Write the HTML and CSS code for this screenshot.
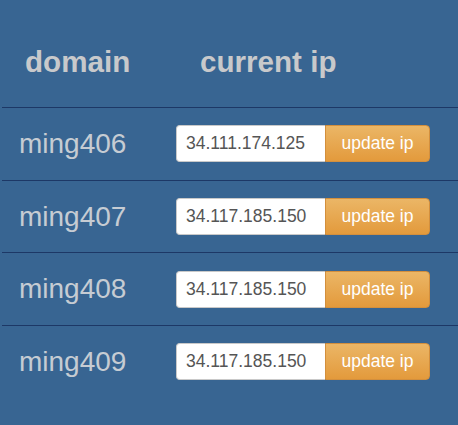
FILE: index.html
```html
<!DOCTYPE html>
<html>
<head>
<meta charset="utf-8">
<link rel="stylesheet" href="styles.css">
</head>
<body>
<div class="table">
  <div class="head">
    <div class="th th-domain">domain</div>
    <div class="th th-ip">current ip</div>
  </div>
  <div class="row">
    <div class="name">ming406</div>
    <div class="group"><input class="ip" type="text" value="34.111.174.125"><button class="btn">update ip</button></div>
  </div>
  <div class="row">
    <div class="name">ming407</div>
    <div class="group"><input class="ip" type="text" value="34.117.185.150"><button class="btn">update ip</button></div>
  </div>
  <div class="row">
    <div class="name">ming408</div>
    <div class="group"><input class="ip" type="text" value="34.117.185.150"><button class="btn">update ip</button></div>
  </div>
  <div class="row">
    <div class="name">ming409</div>
    <div class="group"><input class="ip" type="text" value="34.117.185.150"><button class="btn">update ip</button></div>
  </div>
</div>
</body>
</html>
```

FILE: styles.css
```css
html, body {
  margin: 0;
  padding: 0;
  background: #386592;
  height: 100%;
}
body {
  font-family: "Liberation Sans", Arial, sans-serif;
}
.table {
  padding-left: 2px;
}
.head {
  display: grid;
  grid-template-columns: 174px 1fr;
  height: 107px;
  box-sizing: border-box;
  padding-top: 45px;
}
.th {
  font-size: 29.6px;
  font-weight: bold;
  color: #c8c9cb;
}
.th-domain {
  padding-left: 23px;
}
.th-ip {
  padding-left: 24px;
}
.row {
  display: grid;
  grid-template-columns: 174px 1fr;
  align-items: center;
  height: 72.7px;
  box-sizing: border-box;
  border-top: 1px solid #1d3866;
}
.name {
  font-size: 28px;
  color: #c6ccd3;
  padding-left: 17px;
}
.group {
  display: flex;
  height: 37px;
}
.ip {
  width: 149px;
  height: 37px;
  box-sizing: border-box;
  border: 1px solid #c9c9c9;
  border-right: none;
  border-radius: 4px 0 0 4px;
  background: #fff;
  padding: 0 0 0 9px;
  margin: 0;
  font-family: "Liberation Sans", Arial, sans-serif;
  font-size: 17.5px;
  color: #555;
  outline: none;
}
.btn {
  width: 105px;
  height: 37px;
  box-sizing: border-box;
  margin: 0;
  padding: 0;
  border: 1px solid #d38f3d;
  border-radius: 0 4px 4px 0;
  background: linear-gradient(#ebb666, #e39a3c);
  color: #fff;
  font-family: "Liberation Sans", Arial, sans-serif;
  font-size: 17.5px;
}
```
